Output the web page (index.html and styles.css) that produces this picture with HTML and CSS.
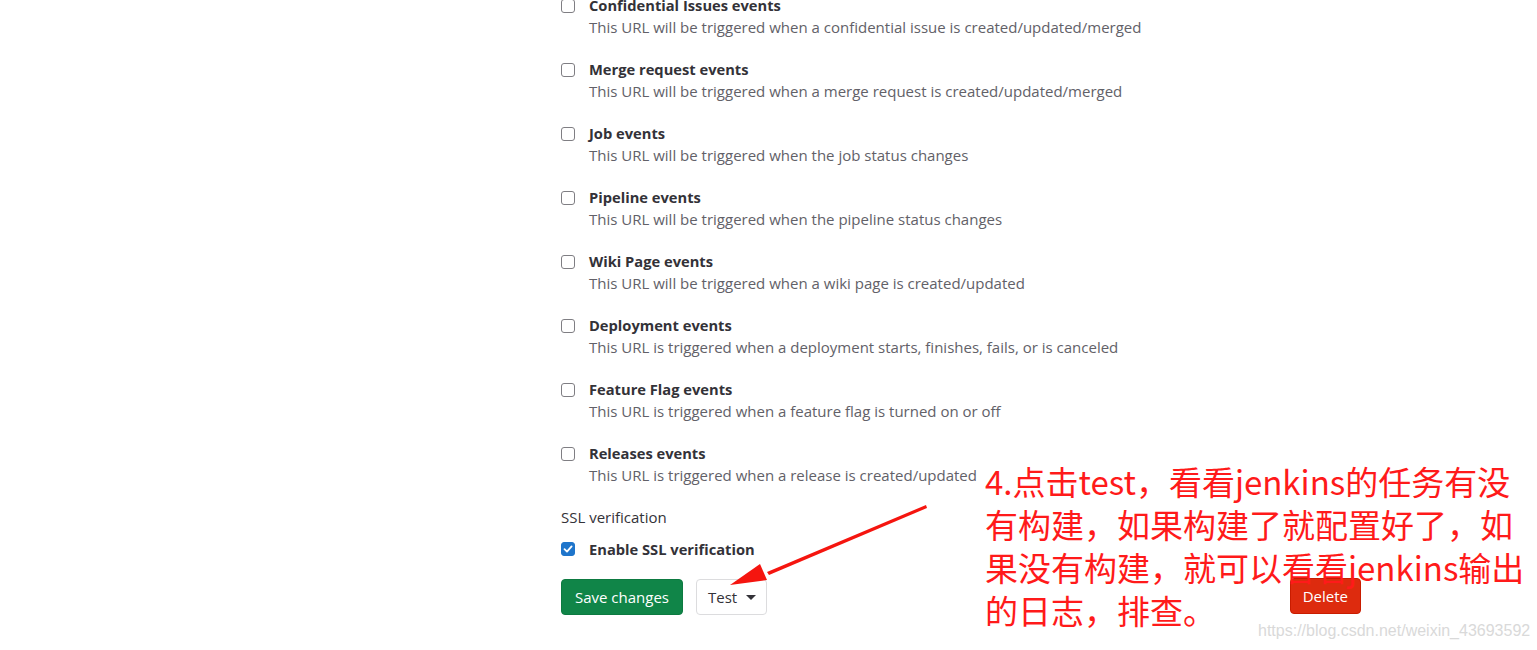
FILE: index.html
```html
<!DOCTYPE html>
<html>
<head>
  <title>Webhook settings</title>
  <link rel="stylesheet" href="styles.css">
</head>
<body>

  <div class="webhook-form">
    <ul class="trigger-list">
      <li class="trigger">
        <span class="checkbox"></span>
        <div class="trigger-text">
          <div class="trigger-title">Confidential Issues events</div>
          <div class="trigger-help">This URL will be triggered when a confidential issue is created/updated/merged</div>
        </div>
      </li>
      <li class="trigger">
        <span class="checkbox"></span>
        <div class="trigger-text">
          <div class="trigger-title">Merge request events</div>
          <div class="trigger-help">This URL will be triggered when a merge request is created/updated/merged</div>
        </div>
      </li>
      <li class="trigger">
        <span class="checkbox"></span>
        <div class="trigger-text">
          <div class="trigger-title">Job events</div>
          <div class="trigger-help">This URL will be triggered when the job status changes</div>
        </div>
      </li>
      <li class="trigger">
        <span class="checkbox"></span>
        <div class="trigger-text">
          <div class="trigger-title">Pipeline events</div>
          <div class="trigger-help">This URL will be triggered when the pipeline status changes</div>
        </div>
      </li>
      <li class="trigger">
        <span class="checkbox"></span>
        <div class="trigger-text">
          <div class="trigger-title">Wiki Page events</div>
          <div class="trigger-help">This URL will be triggered when a wiki page is created/updated</div>
        </div>
      </li>
      <li class="trigger">
        <span class="checkbox"></span>
        <div class="trigger-text">
          <div class="trigger-title">Deployment events</div>
          <div class="trigger-help">This URL is triggered when a deployment starts, finishes, fails, or is canceled</div>
        </div>
      </li>
      <li class="trigger">
        <span class="checkbox"></span>
        <div class="trigger-text">
          <div class="trigger-title">Feature Flag events</div>
          <div class="trigger-help">This URL is triggered when a feature flag is turned on or off</div>
        </div>
      </li>
      <li class="trigger">
        <span class="checkbox"></span>
        <div class="trigger-text">
          <div class="trigger-title">Releases events</div>
          <div class="trigger-help">This URL is triggered when a release is created/updated</div>
        </div>
      </li>
    </ul>

    <div class="ssl-label">SSL verification</div>
    <div class="ssl-row">
      <span class="checkbox checked">
        <svg width="10" height="10" viewBox="0 0 10 10"><path d="M1.5 5.2 L4 7.6 L8.6 2.4" fill="none" stroke="#fff" stroke-width="1.8" stroke-linecap="round" stroke-linejoin="round"/></svg>
      </span>
      <span class="trigger-title">Enable SSL verification</span>
    </div>

    <div class="actions">
      <button class="btn btn-save">Save changes</button>
      <button class="btn btn-test">Test <span class="caret"></span></button>
      <button class="btn btn-delete">Delete</button>
    </div>
  </div>

  <!-- screenshot annotation -->
  <div class="note">4.点击test，看看jenkins的任务有没<br>有构建，如果构建了就配置好了，如<br>果没有构建，就可以看看jenkins输出<br>的日志，排查。</div>
  <svg class="arrow" width="210" height="95" viewBox="0 0 210 95">
    <polygon points="197,2 198,5 40,72 38,69" fill="#f5150f"/>
    <polygon points="1,82 31,61 38,77" fill="#f5150f"/>
  </svg>
  <div class="watermark">https://blog.csdn.net/weixin_43693592</div>

</body>
</html>
```

FILE: styles.css
```css
body {
  margin: 0;
  font-family: "Open Sans", "Noto Sans", sans-serif;
  font-size: 15px;
  color: #333238;
  background: #fff;
  overflow: hidden;
}

.webhook-form {
  width: 800px;
  margin: -5px 0 0 561px;
}

.trigger-list {
  list-style: none;
  margin: 0;
  padding: 0;
}

.trigger {
  display: flex;
  align-items: flex-start;
  gap: 14px;
  margin-bottom: 22px;
}

.trigger .checkbox {
  margin-top: 4px;
}

.checkbox {
  box-sizing: border-box;
  width: 14px;
  height: 14px;
  border: 1px solid #7f7e83;
  border-radius: 3px;
  background: #fff;
  display: flex;
  align-items: center;
  justify-content: center;
  flex: none;
}

.checkbox.checked {
  background: #1f75cb;
  border-color: #1f75cb;
}

.trigger-title {
  font-size: 14.7px;
  font-weight: 700;
  line-height: 20px;
}

.trigger-help {
  color: #626168;
  line-height: 20px;
  margin-top: 2px;
}

.ssl-label {
  line-height: 20px;
  margin-top: 21px;
}

.ssl-row {
  display: flex;
  align-items: center;
  gap: 14px;
  margin-top: 12px;
  line-height: 20px;
}

.actions {
  display: flex;
  gap: 13px;
  margin-top: 20px;
}

.btn {
  font-family: inherit;
  font-size: 15px;
  height: 36px;
  padding: 0 13px;
  border-radius: 4px;
  border: 1px solid transparent;
  cursor: pointer;
}

.btn-save {
  background: #108548;
  color: #fff;
  border-color: #0d7a41;
}

.btn-test {
  background: #fff;
  color: #333238;
  border-color: #dcdcde;
  display: flex;
  align-items: center;
  gap: 9px;
  padding: 0 10px 0 11px;
}

.caret {
  width: 0;
  height: 0;
  border-left: 5px solid transparent;
  border-right: 5px solid transparent;
  border-top: 5px solid #333238;
}

.btn-delete {
  margin-left: auto;
  margin-top: -1px;
  background: #dd2b0e;
  color: #fff;
  border-color: #c91c00;
  padding: 0 12px;
}

.note {
  position: absolute;
  left: 985px;
  top: 460px;
  font-family: "Noto Sans CJK SC", sans-serif;
  font-size: 33px;
  line-height: 43px;
  color: #ff1a1a;
  white-space: nowrap;
}

.arrow {
  position: absolute;
  left: 729px;
  top: 503px;
}

.watermark {
  position: absolute;
  left: 1258px;
  top: 622px;
  font-family: "Liberation Sans", sans-serif;
  font-size: 16px;
  color: #d9d9d9;
}
```
